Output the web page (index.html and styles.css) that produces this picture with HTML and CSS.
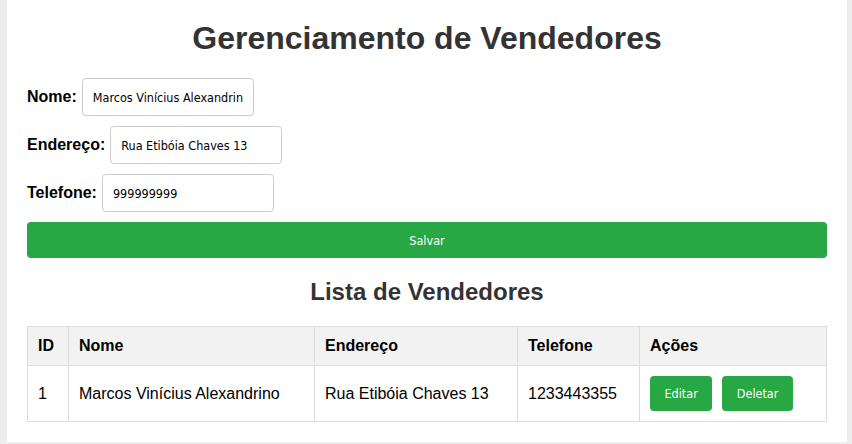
FILE: index.html
```html
<!DOCTYPE html>
<html lang="pt-BR">
<head>
<meta charset="utf-8">
<title>Gerenciamento de Vendedores</title>
<link rel="stylesheet" href="styles.css">
</head>
<body>
<div class="container">
  <h1 class="title">Gerenciamento de Vendedores</h1>
  <form class="form">
    <div class="field">
      <label class="label">Nome:</label>
      <input class="input" type="text" value="Marcos Vinícius Alexandrino">
    </div>
    <div class="field">
      <label class="label">Endereço:</label>
      <input class="input" type="text" value="Rua Etibóia Chaves 13">
    </div>
    <div class="field">
      <label class="label">Telefone:</label>
      <input class="input" type="text" value="999999999">
    </div>
    <button class="btn btn-block" type="button">Salvar</button>
  </form>
  <h2 class="subtitle">Lista de Vendedores</h2>
  <table class="table">
    <thead>
      <tr>
        <th class="col-id">ID</th>
        <th class="col-nome">Nome</th>
        <th class="col-end">Endereço</th>
        <th class="col-tel">Telefone</th>
        <th class="col-acoes">Ações</th>
      </tr>
    </thead>
    <tbody>
      <tr>
        <td>1</td>
        <td>Marcos Vinícius Alexandrino</td>
        <td>Rua Etibóia Chaves 13</td>
        <td>1233443355</td>
        <td><div class="actions"><button class="btn btn-sm" type="button">Editar</button><button class="btn btn-sm" type="button">Deletar</button></div></td>
      </tr>
    </tbody>
  </table>
</div>
</body>
</html>
```
FILE: styles.css
```css
html, body {
  margin: 0;
  padding: 0;
}
body {
  background: #ededed;
  font-family: "Liberation Sans", Arial, sans-serif;
  color: #000;
}
.container {
  width: 800px;
  margin: 0 0 0 7px;
  padding: 20px;
  background: #fff;
}
.title {
  margin: 0 0 21px;
  font-size: 32px;
  line-height: 37px;
  text-align: center;
  color: #333;
}
.form {
  margin: 0;
}
.field {
  display: flex;
  align-items: center;
  gap: 5px;
  margin-bottom: 10px;
}
.label {
  font-weight: bold;
  font-size: 16px;
}
.input {
  width: 172px;
  height: 38px;
  box-sizing: border-box;
  padding: 10px;
  border: 1px solid #ccc;
  border-radius: 4px;
  font-family: "DejaVu Sans Condensed", "DejaVu Sans", sans-serif;
  font-size: 12.5px;
  color: #000;
}
.btn {
  background: #28a745;
  color: #fff;
  border: none;
  border-radius: 4px;
  font-family: "DejaVu Sans Condensed", "DejaVu Sans", sans-serif;
  font-size: 12.5px;
  cursor: pointer;
}
.btn-block {
  display: block;
  width: 100%;
  height: 36px;
  padding: 0;
}
.subtitle {
  margin: 20px 0;
  font-size: 24px;
  line-height: 28px;
  text-align: center;
  color: #333;
}
.table {
  width: 100%;
  border-collapse: collapse;
  font-size: 16px;
}
.table th, .table td {
  border: 1px solid #ddd;
  padding: 10px;
  text-align: left;
  line-height: 18px;
}
.table th {
  background: #f2f2f2;
  font-weight: bold;
}
.col-id { width: 20px; }
.col-nome { width: 225px; }
.col-end { width: 182px; }
.col-tel { width: 101px; }
.actions {
  display: flex;
  gap: 10px;
}
.btn-sm {
  height: 35px;
  padding: 0 14.5px;
}
```
